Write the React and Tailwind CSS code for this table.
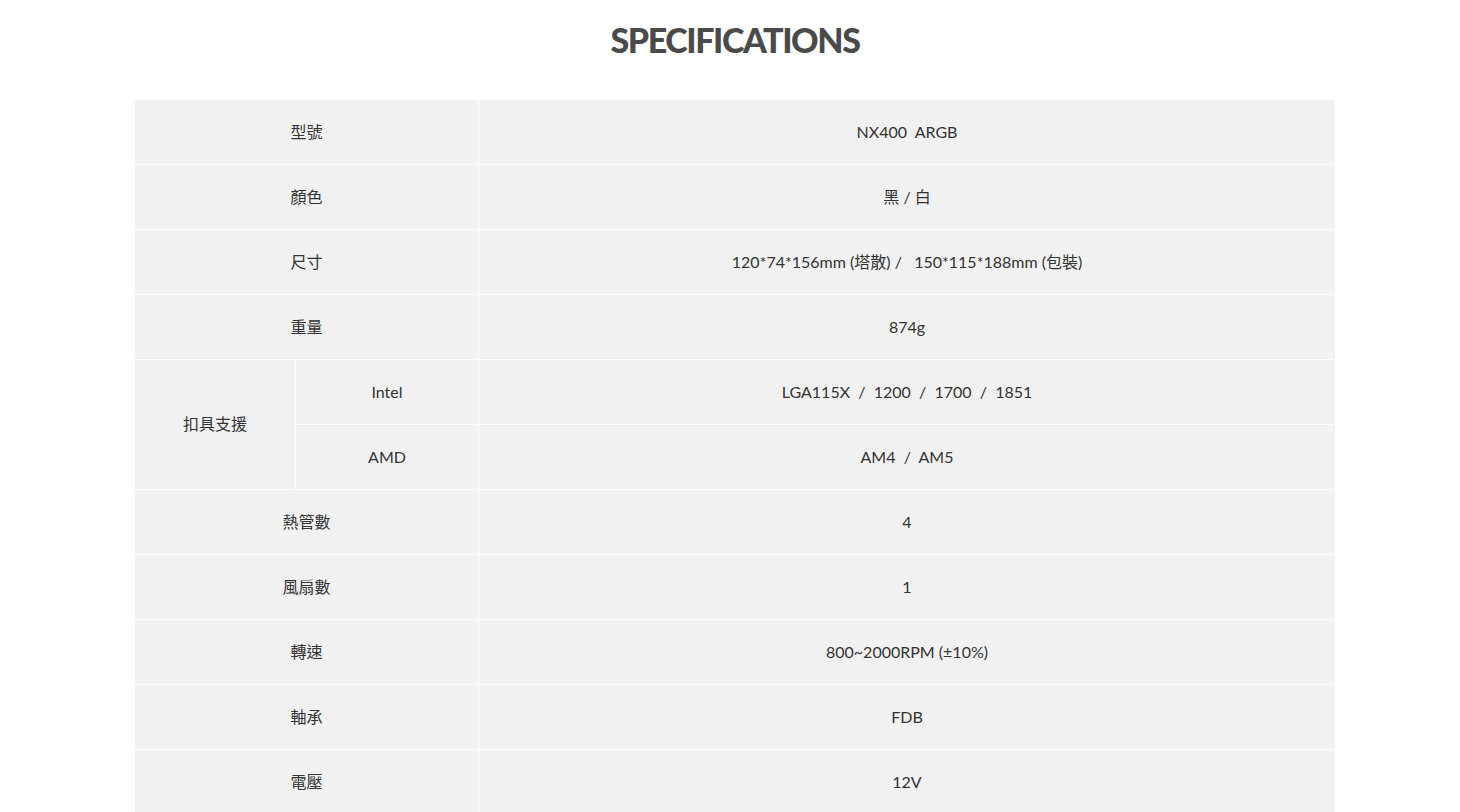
import React from "react";

const rows = [
  { label: "型號", value: "NX400  ARGB" },
  { label: "顏色", value: "黑 / 白" },
  { label: "尺寸", value: "120*74*156mm (塔散) /   150*115*188mm (包裝)" },
  { label: "重量", value: "874g" },
  {
    label: "扣具支援",
    sub: [
      { label: "Intel", value: "LGA115X  /  1200  /  1700  /  1851" },
      { label: "AMD", value: "AM4  /  AM5" },
    ],
  },
  { label: "熱管數", value: "4" },
  { label: "風扇數", value: "1" },
  { label: "轉速", value: "800~2000RPM (±10%)" },
  { label: "軸承", value: "FDB" },
  { label: "電壓", value: "12V" },
];

const cell =
  "bg-[#f1f1f1] h-[64px] flex items-center justify-center text-[16px] text-[#333] whitespace-pre pb-[1px]";

function App() {
  return (
    <div
      className="min-h-screen bg-white pl-[10px]"
      style={{ fontFamily: "Lato, 'Noto Sans CJK TC', sans-serif" }}
    >
      <h2 className="pt-[19px] h-[100px] text-center text-[34px] font-black tracking-[-1.4px] text-[#4a4a4a] leading-[42px]">
        SPECIFICATIONS
      </h2>
      <div className="mx-auto w-[1200px] grid grid-cols-[160px_182px_856px] gap-px bg-white">
        {rows.map((row) =>
          row.sub ? (
            <React.Fragment key={row.label}>
              <div className={`${cell} row-span-2 h-auto`}>{row.label}</div>
              {row.sub.map((s) => (
                <React.Fragment key={s.label}>
                  <div className={cell}>{s.label}</div>
                  <div className={cell}>{s.value}</div>
                </React.Fragment>
              ))}
            </React.Fragment>
          ) : (
            <React.Fragment key={row.label}>
              <div className={`${cell} col-span-2`}>{row.label}</div>
              <div className={cell}>{row.value}</div>
            </React.Fragment>
          )
        )}
      </div>
    </div>
  );
}

export default App;
